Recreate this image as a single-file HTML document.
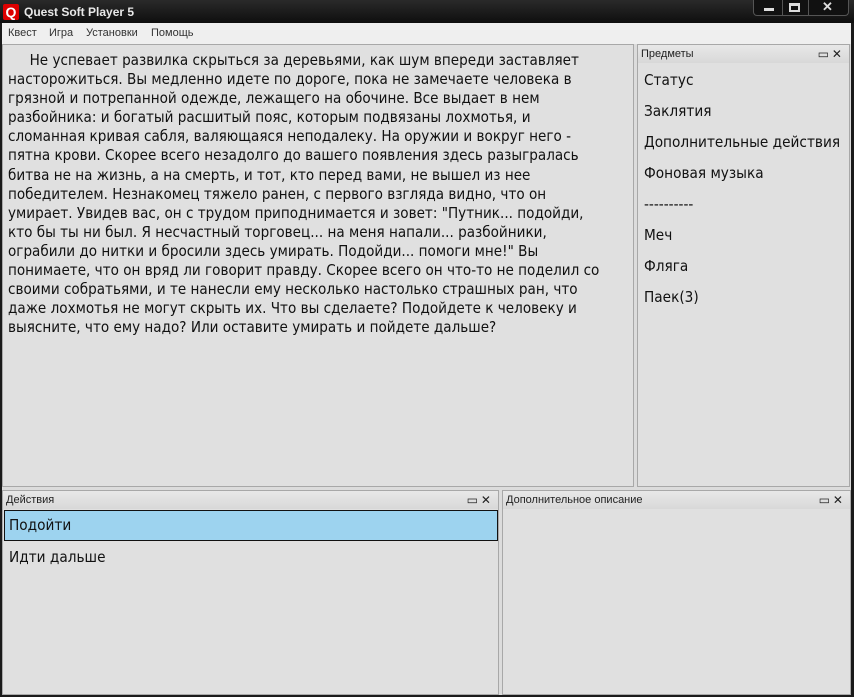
<!DOCTYPE html><html><head><meta charset="utf-8"><style>
*{margin:0;padding:0;box-sizing:border-box}
body{width:854px;height:697px;background:#1a1a1a;position:relative;overflow:hidden;font-family:"DejaVu Sans","Liberation Sans",sans-serif}
.abs{position:absolute}
#title{left:0;top:0;width:854px;height:23px;background:linear-gradient(#2a2a2a,#0e0e0e);color:#e8e8e8;font:bold 12px "Liberation Sans",sans-serif}
#menu{left:2px;top:23px;width:849px;height:21px;background:#efefef;font:11px "Liberation Sans",sans-serif;color:#333}
#menu span{position:absolute;top:4px}
.pane{background:#e0e0e0;border:1px solid #a8a8a8}
.hdr{position:absolute;left:0;top:0;right:0;height:18px;background:linear-gradient(#e8e8e8,#d8d8d8);font:11px "Liberation Sans",sans-serif;color:#222;padding:3px 0 0 3px}
.hdr .ic{position:absolute;right:4px;top:2px;font-size:12px;letter-spacing:3px}
.txt{font-size:15px;line-height:19.1px;color:#111;white-space:nowrap;transform:scaleX(0.905);transform-origin:0 0}
.item{position:absolute;left:6px;font-size:15px;color:#111;white-space:nowrap;transform:scaleX(0.912);transform-origin:0 0}
</style></head><body>
<div class="abs" style="left:2px;top:44px;width:849px;height:651px;background:#dcdcdc"></div>
<div id="title" class="abs">
 <div class="abs" style="left:3px;top:4px;width:16px;height:16px;background:#d00;border-radius:2px;color:#fff;font:bold 14px 'Liberation Sans';text-align:center;line-height:16px">Q</div>
 <div class="abs" style="left:24px;top:5px">Quest Soft Player 5</div>
 <div class="abs" style="left:753px;top:0;width:96px;height:16px;border:1px solid #555;border-top:none;border-radius:0 0 4px 4px;background:#111">
  <div class="abs" style="left:10px;top:8px;width:10px;height:3px;background:#ddd"></div>
  <div class="abs" style="left:28px;top:0;width:1px;height:16px;background:#555"></div>
  <div class="abs" style="left:35px;top:3px;width:11px;height:9px;border:2px solid #ddd;border-top-width:3px"></div>
  <div class="abs" style="left:54px;top:0;width:1px;height:16px;background:#555"></div>
  <div class="abs" style="left:68px;top:-1px;color:#ddd;font:bold 13px 'Liberation Sans'">✕</div>
 </div>
</div>
<div id="menu" class="abs"><span style="left:6px">Квест</span><span style="left:47px">Игра</span><span style="left:84px">Установки</span><span style="left:149px">Помощь</span></div>
<div class="abs pane" style="left:2px;top:44px;width:632px;height:443px;padding:6px 0 0 5px">
<div class="txt">&nbsp;&nbsp;&nbsp;&nbsp;&nbsp;Не успевает развилка скрыться за деревьями, как шум впереди заставляет<br>насторожиться. Вы медленно идете по дороге, пока не замечаете человека в<br>грязной и потрепанной одежде, лежащего на обочине. Все выдает в нем<br>разбойника: и богатый расшитый пояс, которым подвязаны лохмотья, и<br>сломанная кривая сабля, валяющаяся неподалеку. На оружии и вокруг него -<br>пятна крови. Скорее всего незадолго до вашего появления здесь разыгралась<br>битва не на жизнь, а на смерть, и тот, кто перед вами, не вышел из нее<br>победителем. Незнакомец тяжело ранен, с первого взгляда видно, что он<br>умирает. Увидев вас, он с трудом приподнимается и зовет: "Путник... подойди,<br>кто бы ты ни был. Я несчастный торговец... на меня напали... разбойники,<br>ограбили до нитки и бросили здесь умирать. Подойди... помоги мне!" Вы<br>понимаете, что он вряд ли говорит правду. Скорее всего он что-то не поделил со<br>своими собратьями, и те нанесли ему несколько настолько страшных ран, что<br>даже лохмотья не могут скрыть их. Что вы сделаете? Подойдете к человеку и<br>выясните, что ему надо? Или оставите умирать и пойдете дальше?</div>
</div>
<div class="abs pane" style="left:637px;top:44px;width:213px;height:443px">
<div class="hdr">Предметы<span class="ic">▭✕</span></div>
<div class="item" style="top:26px">Статус</div>
<div class="item" style="top:57px">Заклятия</div>
<div class="item" style="top:88px">Дополнительные действия</div>
<div class="item" style="top:119px">Фоновая музыка</div>
<div class="item" style="top:150px">----------</div>
<div class="item" style="top:181px">Меч</div>
<div class="item" style="top:212px">Фляга</div>
<div class="item" style="top:243px">Паек(3)</div>
</div>
<div class="abs pane" style="left:2px;top:490px;width:497px;height:205px">
<div class="hdr">Действия<span class="ic">▭✕</span></div>
<div class="abs" style="left:1px;top:19px;width:494px;height:31px;background:#9dd3ef;border:1px solid #111"></div>
<div class="item" style="top:25px">Подойти</div>
<div class="item" style="top:57px">Идти дальше</div>
</div>
<div class="abs pane" style="left:502px;top:490px;width:349px;height:205px">
<div class="hdr">Дополнительное описание<span class="ic">▭✕</span></div>
</div>
</body></html>
